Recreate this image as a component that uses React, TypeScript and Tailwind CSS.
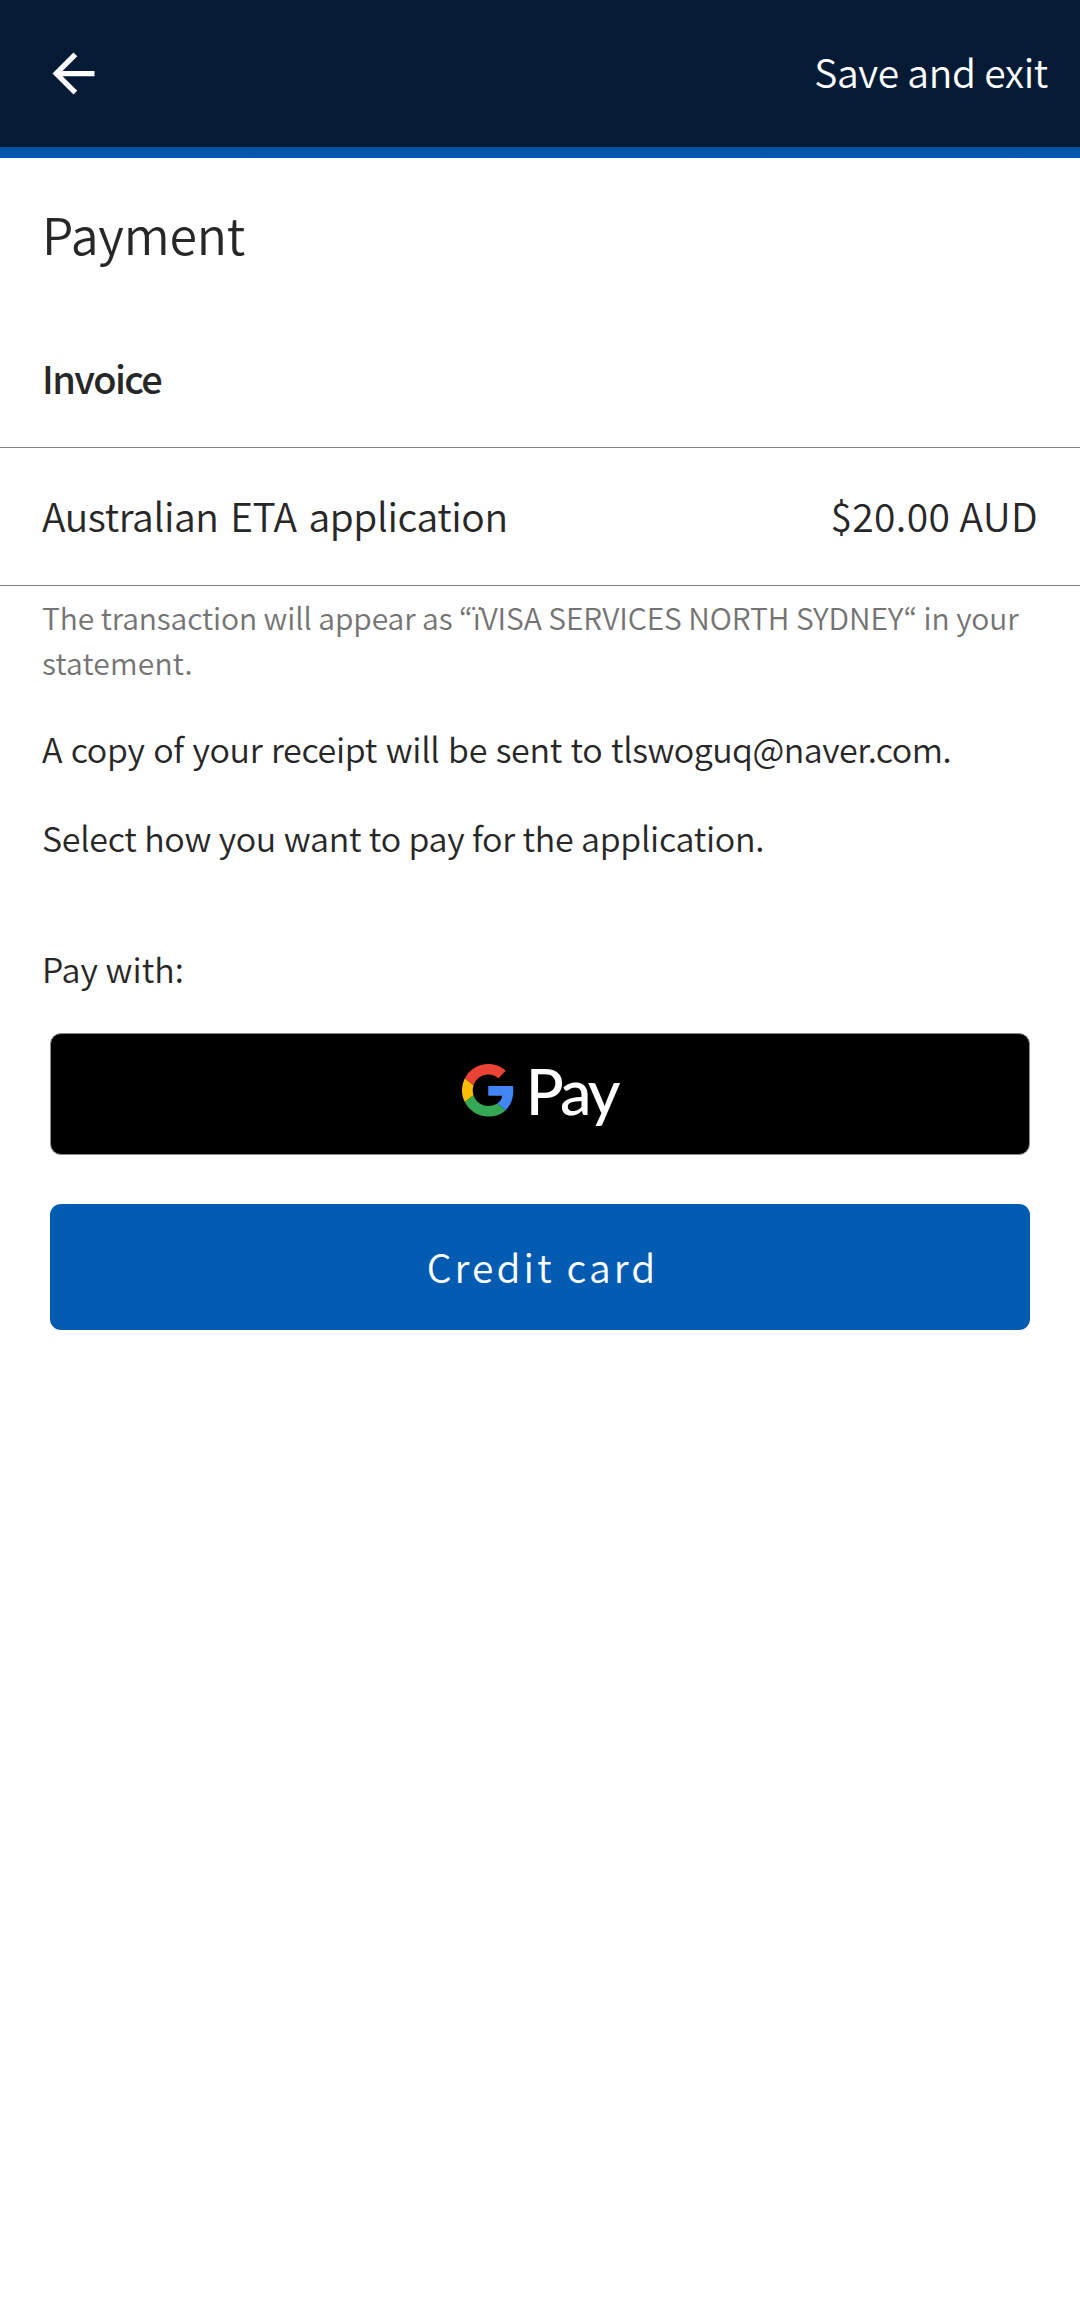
function BackArrow() {
  return (
    <svg viewBox="0 0 24 24" className="size-[63px]" fill="#fff">
      <path d="M20 11H7.83l5.59-5.59L12 4l-8 8 8 8 1.41-1.41L7.83 13H20v-2z" />
    </svg>
  );
}

function GoogleG() {
  return (
    <svg viewBox="0 0 47 48" className="mb-[7px] h-[52.5px] w-[51.4px]">
      <path fill="#EA4335" d="M24 9.5c3.54 0 6.71 1.22 9.21 3.6l6.85-6.85C35.9 2.38 30.47 0 24 0 14.62 0 6.51 5.38 2.56 13.22l7.98 6.19C12.43 13.72 17.74 9.5 24 9.5z" />
      <path fill="#4285F4" d="M46.98 24.55c0-1.57-.15-3.09-.38-4.55H24v9.02h12.94c-.58 2.96-2.26 5.48-4.78 7.18l7.73 6c4.51-4.18 7.09-10.36 7.09-17.65z" />
      <path fill="#FBBC05" d="M10.53 28.59c-.48-1.45-.76-2.99-.76-4.59s.27-3.14.76-4.59l-7.98-6.19C.92 16.46 0 20.12 0 24c0 3.88.92 7.54 2.56 10.78l7.97-6.19z" />
      <path fill="#34A853" d="M24 48c6.48 0 11.93-2.13 15.89-5.81l-7.73-6c-2.15 1.45-4.92 2.3-8.16 2.3-6.26 0-11.57-4.22-13.47-9.91l-7.98 6.19C6.51 42.62 14.62 48 24 48z" />
    </svg>
  );
}

export default function App() {
  return (
    <main className="min-h-[2322px] w-[1080px] bg-[#fefefe] font-['Noto_Sans_CJK_KR','Noto_Sans',sans-serif] font-[350] text-[#272727]">
      {/* Header */}
      <header>
        <div className="flex h-[147px] items-center justify-between bg-[#051b35] pr-[32px] pl-[42px] text-white">
          <button aria-label="Back">
            <BackArrow />
          </button>
          <button className="pb-[5px] text-[39px] leading-[48px] tracking-[-0.3px]">Save and exit</button>
        </div>
        <div className="h-[11px] bg-linear-to-b from-[#0653a1] to-[#005ab5]" />
      </header>

      <h1 className="px-[42px] pt-[45px] text-[50px] leading-[60px] tracking-[-0.2px]">Payment</h1>

      {/* Invoice */}
      <section className="mt-[91px]">
        <h2 className="border-b border-[#808080] px-[42px] pb-[45px] text-[38px] leading-[48px] font-medium tracking-[-1.6px]">
          Invoice
        </h2>
        <div className="flex h-[138px] items-center justify-between border-b border-[#808080] px-[42px] pb-[3px] text-[39px] leading-[48px]">
          <span className="tracking-[-0.4px] [word-spacing:3.4px]">Australian ETA application</span>
          <span className="tracking-[0.4px]">$20.00 AUD</span>
        </div>
      </section>

      <p className="mt-[9px] px-[42px] text-[30px] leading-[45px] tracking-[-0.1px] text-[#747474]">
        The transaction will appear as “ïVISA SERVICES NORTH SYDNEY“ in your
        <br />
        <span className="tracking-[0.2px]">statement.</span>
      </p>
      <div className="mt-[41px] flex flex-col gap-[44px] px-[42px] text-[34px] leading-[45px] tracking-[-0.3px]">
        <p className="[word-spacing:1.3px]">
          A copy of your receipt will be sent to <span className="tracking-[-0.5px]">tlswoguq@naver.com.</span>
        </p>
        <p className="[word-spacing:0.4px]">Select how you want to pay for the application.</p>
      </div>

      {/* Payment methods */}
      <section className="mt-[86px]">
        <p className="px-[42px] text-[34px] leading-[45px]">Pay with:</p>
        <div className="mt-[42px] flex flex-col gap-[49px] px-[50px]">
          <button className="flex h-[122px] items-center justify-center rounded-[11px] border border-[#8a8a8a] bg-black text-white">
            <GoogleG />
            <span className="mb-[6px] ml-[12px] font-['Lato',sans-serif] text-[63px] leading-[72px] font-medium tracking-[-2.8px]">
              Pay
            </span>
          </button>
          <button className="h-[126px] rounded-[11px] bg-[#035bb2] pb-[3px] pl-[5px] text-[39px] leading-[48px] tracking-[3.1px] text-white">
            Credit card
          </button>
        </div>
      </section>
    </main>
  );
}
